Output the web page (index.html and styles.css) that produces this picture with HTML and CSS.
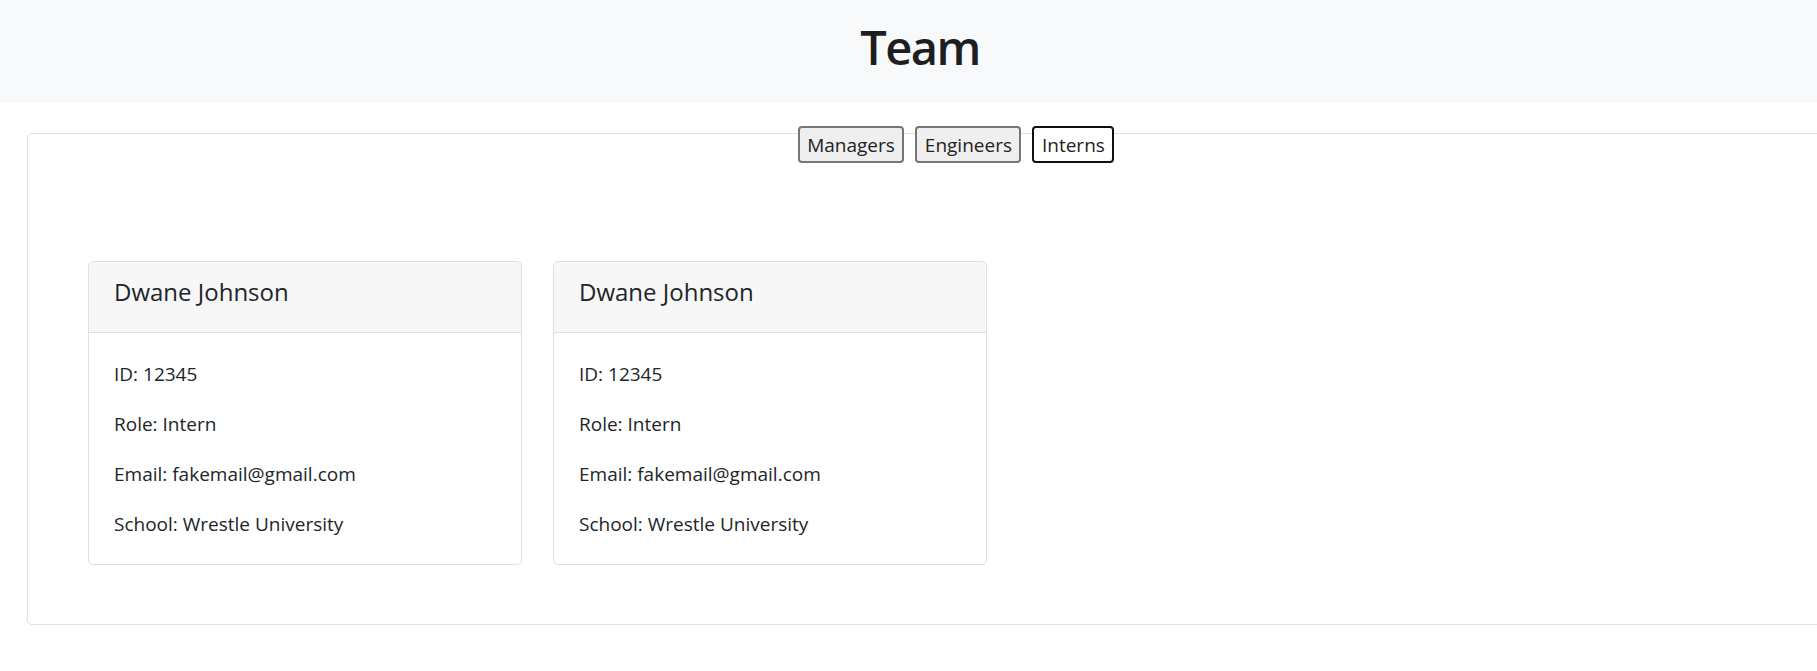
FILE: index.html
```html
<!DOCTYPE html>
<html lang="en">
<head>
<meta charset="utf-8">
<title>Team</title>
<link rel="stylesheet" href="styles.css">
</head>
<body>
<header class="top">
  <h1 class="title">Team</h1>
</header>
<div class="stage">
  <section class="board">
    <div class="tabs">
      <button class="tab">Managers</button>
      <button class="tab">Engineers</button>
      <button class="tab tab-active">Interns</button>
    </div>
    <div class="cards">
      <article class="card">
        <div class="card-head"><h5 class="card-name">Dwane Johnson</h5></div>
        <div class="card-body">
          <p>ID: 12345</p>
          <p>Role: Intern</p>
          <p>Email: fakemail@gmail.com</p>
          <p>School: Wrestle University</p>
        </div>
      </article>
      <article class="card">
        <div class="card-head"><h5 class="card-name">Dwane Johnson</h5></div>
        <div class="card-body">
          <p>ID: 12345</p>
          <p>Role: Intern</p>
          <p>Email: fakemail@gmail.com</p>
          <p>School: Wrestle University</p>
        </div>
      </article>
    </div>
  </section>
</div>
</body>
</html>
```
FILE: styles.css
```css
html, body {
  margin: 0;
  padding: 0;
  background: #fff;
}
body {
  font-family: "Open Sans", "Noto Sans", sans-serif;
  color: #212529;
  font-size: 20px;
  line-height: 1.5;
}
.top {
  background: #f8f9fa;
  height: 103px;
  box-sizing: border-box;
  padding-top: 17px;
  padding-left: 23px;
  text-align: center;
}
.title {
  margin: 0;
  font-size: 47px;
  font-weight: 600;
  letter-spacing: -1.5px;
  line-height: 60px;
  color: #1c1e21;
}
.stage {
  overflow: hidden;
  padding-top: 30px;
  padding-bottom: 40px;
}
.board {
  margin-left: 27px;
  width: 1858px;
  box-sizing: border-box;
  border: 1px solid #dfdfdf;
  border-radius: 5px;
  padding: 0 60px 59px;
}
.tabs {
  display: flex;
  justify-content: center;
  gap: 11px;
  margin-top: -8px;
}
.tab {
  font-family: inherit;
  font-size: 19px;
  line-height: 30px;
  color: #222;
  background: #efefef;
  border: 2px solid #767676;
  border-radius: 4px;
  padding: 1.5px 7.5px;
  margin: 0;
}
.tab-active {
  background: #fff;
  border-color: #101010;
}
.cards {
  display: flex;
  gap: 31px;
  margin-top: 98px;
}
.card {
  width: 434px;
  box-sizing: border-box;
  border: 1px solid #dfdfdf;
  border-radius: 5px;
  overflow: hidden;
}
.card-head {
  background: #f7f7f7;
  border-bottom: 1px solid #dfdfdf;
  padding: 15px 25px;
}
.card-name {
  margin: 0 0 10px;
  font-size: 24px;
  font-weight: 500;
  line-height: 30px;
  color: #212529;
}
.card-body {
  padding: 26px 25px 25px;
}
.card-body p {
  margin: 0 0 20px;
  font-size: 19px;
  line-height: 30px;
}
.card-body p:last-child {
  margin-bottom: 0;
}
```
